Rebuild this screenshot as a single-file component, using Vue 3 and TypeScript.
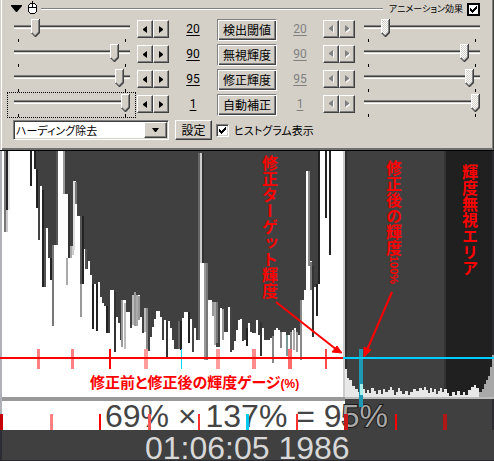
<script setup lang="ts">
import { ref } from 'vue'

interface Param {
  label: string
  min: number
  max: number
  start: number
  end: number
}

const params = ref<Param[]>([
  { label: '検出閾値', min: 5, max: 100, start: 20, end: 20 },
  { label: '無視輝度', min: 5, max: 100, start: 90, end: 90 },
  { label: '修正輝度', min: 5, max: 100, start: 95, end: 95 },
  { label: '自動補正', min: 0, max: 1, start: 1, end: 1 },
])
const filter = ref('ハーディング除去')
const animate = ref(true)
const histogram = ref(true)

function step(p: Param, delta: number) {
  p.start = Math.min(p.max, Math.max(p.min, p.start + delta))
}

// Top edge of the luminance curve, one value for every two columns.
const curve: number[] = [
  151, 151, 232, 232, 151, 151, 151, 151, 151, 151, 151, 151, 151, 151, 151, 186, 151, 169, 208, 240,
  186, 287, 287, 228, 258, 280, 326, 245, 245, 151, 151, 151, 194, 194, 258, 246, 246, 181, 204, 216,
  317, 284, 249, 269, 261, 275, 329, 284, 331, 282, 297, 303, 306, 333, 333, 290, 290, 352, 317, 323,
  340, 300, 300, 312, 312, 328, 295, 292, 295, 295, 317, 333, 308, 308, 351, 337, 327, 319, 311, 311,
  317, 340, 320, 357, 321, 328, 340, 349, 349, 321, 350, 318, 312, 312, 343, 319, 352, 328, 340, 340,
  153, 263, 263, 360, 300, 300, 302, 302, 347, 347, 308, 309, 332, 332, 307, 352, 350, 341, 330, 320,
  319, 341, 340, 346, 323, 332, 333, 333, 320, 335, 356, 328, 340, 340, 340, 338, 363, 330, 328, 330,
  348, 332, 332, 356, 335, 335, 330, 328, 332, 335, 360, 300, 290, 171, 266, 261, 337, 287, 316, 284,
]
const darkArea =
  'M0 151' + curve.map((y, i) => `V${y}H${i * 2 + 2}`).join('') + 'V151Z'

// Half-tone columns: x, top, bottom, colour
const tones: [number, number, number, string][] = [
  [4, 151, 232, '#777'], [6, 210, 232, '#c8c8c8'], [8, 151, 210, '#e4e4e4'], [6, 151, 210, '#222'],
  [30, 151, 186, '#222'], [34, 151, 169, '#222'], [36, 169, 208, '#222'], [38, 208, 240, '#444'],
  [42, 190, 287, '#222'], [44, 228, 287, '#555'], [48, 232, 258, '#444'], [50, 258, 280, '#222'],
  [52, 245, 326, '#777'], [56, 151, 245, '#555'], [63, 151, 194, '#999'], [66, 258, 285, '#aaa'],
  [68, 194, 258, '#333'], [70, 246, 258, '#aaa'], [72, 246, 255, '#ccc'], [73, 181, 250, '#ddd'],
  [75, 182, 204, '#777'], [77, 204, 216, '#444'], [80, 216, 317, '#555'], [80, 284, 317, '#999'],
  [82, 216, 284, '#222'], [85, 249, 269, '#555'], [92, 284, 329, '#222'], [96, 284, 331, '#222'],
  [106, 306, 333, '#222'], [114, 292, 352, '#333'], [121, 300, 347, '#999'], [124, 303, 349, '#bbb'],
  [132, 295, 325, '#bbb'], [134, 292, 326, '#999'], [136, 295, 326, '#aaa'], [138, 296, 320, '#999'],
  [144, 308, 332, '#bbb'], [146, 308, 350, '#888'], [166, 322, 357, '#333'], [178, 321, 349, '#666'],
  [180, 321, 350, '#222'], [188, 312, 343, '#222'], [192, 319, 352, '#444'], [198, 153, 340, '#666'],
  [200, 153, 263, '#ccc'], [202, 153, 263, '#333'], [204, 263, 360, '#999'], [206, 263, 360, '#777'],
  [212, 302, 316, '#999'], [214, 302, 345, '#aaa'], [216, 302, 343, '#777'], [222, 309, 340, '#999'],
  [230, 307, 352, '#444'], [246, 328, 346, '#222'], [260, 322, 356, '#333'], [272, 336, 363, '#888'],
  [280, 332, 348, '#888'], [286, 335, 356, '#7a9a98'], [290, 332, 349, '#888'], [293, 330, 350, '#aaa'],
  [296, 332, 352, '#999'], [300, 300, 360, '#888'], [308, 171, 266, '#888'], [310, 262, 290, '#777'],
  [312, 266, 337, '#333'], [316, 284, 316, '#222'], [318, 151, 284, '#222'], [325, 151, 218, '#222'],
  [329, 151, 255, '#222'], [343, 151, 397, '#ccc'],
]

const floor =
  'M345 397V369H347V378H349V380H352V386H355V389H358V392H360V386H363V389H365V393H367V390H369V393H371V388H374V391H376V394H378V390H381V394H383V389H385V392H388V390H390V387H392V390H394V395H396V392H398V388H400V391H402V394H405V391H408V395H410V392H413V389H416V391H419V388H422V390H424V387H426V390H428V393H430V388H432V392H434V389H436V394H438V391H440V388H442V392H444V389H447V393H449V396H452V392H455V395H457V391H460V395H463V392H465V395H468V390H471V387H474V385H476V388H479V392H482V389H484V384H486V380H488V376H490V367H492V355H494V397Z'

const upperTicks: [number, number, string][] = [
  [37, 3, '#ff8080'], [71, 3, '#ff8080'], [109, 2, '#f00'], [144, 4, '#ff9c9c'], [181, 1, '#00d8ff'],
  [216, 4, '#ff9c9c'], [252, 4, '#ff8c8c'], [288, 4, '#ff6a6a'], [325, 2, '#ff4a4a'],
]
const lowerTicks: [number, number, string][] = [
  [0, 3, '#c40000'], [50, 3, '#ff8080'], [99, 2, '#f00'], [148, 3, '#ff5a5a'], [198, 2, '#ff3030'],
  [246, 3, '#00c8ee'], [296, 2, '#ff3030'], [344, 4, '#c81818'], [395, 2, '#f00'], [443, 4, '#b01818'],
]
</script>

<template>
  <main class="window">
    <section class="panel">
      <header class="head">
        <svg class="fold" width="11" height="7" viewBox="0 0 11 7"><path d="M0 0H11V1L6 7H5L0 1Z" /></svg>
        <svg width="9" height="13" viewBox="0 0 9 13" shape-rendering="crispEdges">
          <path d="M4 0H5V2H7V3H8V4H9V11H8V12H7V13H2V12H1V11H0V4H1V3H2V2H4Z" />
          <path fill="#fff" d="M2 3H4V6H1V4H2ZM5 3H7V4H8V6H5ZM1 7H8V11H7V12H2V11H1Z" />
        </svg>
        <span class="rule"></span>
        <label class="check bold">アニメーション効果<input v-model="animate" type="checkbox" /></label>
      </header>

      <div v-for="(p, i) in params" :key="p.label" class="row">
        <div class="slider" :class="{ focused: i === 3 }">
          <input v-model.number="p.start" type="range" :min="p.min" :max="p.max" :aria-label="p.label" />
          <div class="marks"></div>
        </div>
        <div class="spin">
          <button type="button" aria-label="−" @click="step(p, -1)">
            <svg width="4" height="7" viewBox="0 0 4 7"><path d="M4 0V7L0 4V3Z" /></svg>
          </button>
          <button type="button" aria-label="+" @click="step(p, 1)">
            <svg width="4" height="7" viewBox="0 0 4 7"><path d="M0 0V7L4 4V3Z" /></svg>
          </button>
        </div>
        <button type="button" class="num">{{ p.start }}</button>
        <button type="button" class="param">{{ p.label }}</button>
        <button type="button" class="num" disabled>{{ p.end }}</button>
        <div class="spin">
          <button type="button" disabled aria-label="−">
            <svg width="5" height="8" viewBox="0 0 5 8"><path fill="#fff" d="M5 1V8L1 5V4Z" /><path d="M4 0V7L0 4V3Z" /></svg>
          </button>
          <button type="button" disabled aria-label="+">
            <svg width="5" height="8" viewBox="0 0 5 8"><path fill="#fff" d="M1 1V8L5 5V4Z" /><path d="M0 0V7L4 4V3Z" /></svg>
          </button>
        </div>
        <div class="slider">
          <input v-model.number="p.end" type="range" disabled :min="p.min" :max="p.max" :aria-label="p.label" />
          <div class="marks"></div>
        </div>
      </div>

      <footer class="foot">
        <div class="combo">
          <select v-model="filter" aria-label="フィルタ">
            <option>ハーディング除去</option>
          </select>
          <span class="drop"><svg width="7" height="4" viewBox="0 0 7 4"><path d="M0 0H7L4 4H3Z" /></svg></span>
        </div>
        <button type="button" class="setup">設定</button>
        <label class="check"><input v-model="histogram" type="checkbox" />ヒストグラム表示</label>
      </footer>
    </section>

    <svg class="chart" viewBox="0 151 494 310">
      <g shape-rendering="crispEdges">
        <rect y="151" width="494" height="310" fill="#fff" />
        <path :d="darkArea" fill="#404040" />
        <rect v-for="(t, i) in tones" :key="i" :x="t[0]" :y="t[1]" width="2" :height="t[2] - t[1]" :fill="t[3]" />
        <rect x="345" y="151" width="149" height="310" fill="#404040" />
        <rect x="345" y="151" width="2" height="218" fill="#303030" />
        <rect x="444" y="151" width="2" height="246" fill="#333" />
        <rect x="446" y="151" width="48" height="246" fill="#202020" />
        <rect x="492" y="151" width="2" height="310" fill="#2c2c30" />
        <path :d="floor" fill="#e8e8e8" />
        <path d="M479 397V392H482V389H484V384H486V380H488V376H490V367H492V355H494V397Z" fill="#a8a8a8" />
        <rect y="397" width="345" height="4" fill="#999" />
        <rect x="345" y="397" width="149" height="2" fill="#bbb" />
        <rect y="430" width="494" height="31" fill="#404040" />
        <rect y="151" width="2" height="279" fill="#b0b0b8" />
        <rect y="430" width="2" height="31" fill="#2c2c34" />
        <rect y="460" width="494" height="1" fill="#2a2a30" />
      </g>
      <text class="digits" x="105" y="427">69% × 137% = 9<tspan class="light">5%</tspan></text>
      <text class="digits time" x="145" y="459">01:06:05 1986</text>
      <g shape-rendering="crispEdges">
        <rect v-for="t in upperTicks" :key="'u' + t[0]" :x="t[0]" y="349" :width="t[1]" height="20" :fill="t[2]" />
        <rect v-for="t in lowerTicks" :key="'l' + t[0]" :x="t[0]" y="414" :width="t[1]" height="16" :fill="t[2]" />
        <rect x="359" y="349" width="4" height="58" fill="#1f98b4" />
        <rect x="360" y="384" width="3" height="11" fill="#a8f0ec" />
        <rect y="357" width="343" height="2" fill="#f00" />
        <rect x="343" y="357" width="151" height="2" fill="#0cf" />
      </g>
      <g class="arrows">
        <path d="M276 302L337 350" />
        <path d="M392 292L367 350" />
        <path class="tip" d="M342 353L337 346L332 352Z" />
        <path class="tip" d="M364 357L364 347L371 350Z" />
      </g>
      <text class="note vertical" x="270" y="155">修正ターゲット輝度</text>
      <text class="note vertical" x="394" y="160">修正後の輝度<tspan class="narrow">100%</tspan></text>
      <text class="note vertical" x="470" y="164">輝度無視エリア</text>
      <text class="note across" x="90" y="388">修正前と修正後の輝度ゲージ<tspan class="unit">(%)</tspan></text>
    </svg>
  </main>
</template>

<style>
body {
  margin: 0;
  background: #404040;
}
</style>

<style scoped>
.window {
  font: 12px/16px "Liberation Sans", "Noto Sans CJK JP", sans-serif;
  color: #000;
}
.window *,
.window {
  box-sizing: border-box;
}
svg {
  display: block;
  flex: none;
}
button,
select,
input {
  font: inherit;
  color: inherit;
  margin: 0;
  padding: 0;
  border-radius: 0;
}
.panel {
  padding-bottom: 10px;
  background: #d4d0c8;
  border-bottom: 1px solid #000;
  box-shadow: inset 1px 0 #d4d0c8, inset 2px 0 #fff, inset -1px 0 #404040, inset -2px 0 #808080, inset 0 -2px #707070;
}
.head {
  display: flex;
  height: 19px;
  padding: 1px 14px 0 11px;
}
.fold {
  margin: 4px 6px 0 0;
}
.rule {
  flex: 1;
  height: 2px;
  margin: 7px 6px 0 4px;
  border-top: 1px solid #808080;
  border-bottom: 1px solid #fff;
}
.check {
  display: flex;
  align-items: center;
  gap: 5px;
  height: 16px;
  font: 11px/16px "Noto Sans CJK JP", sans-serif;
  font-feature-settings: "palt";
  white-space: nowrap;
}
.check.bold {
  gap: 4px;
  font-size: 9px;
}
.check input {
  appearance: none;
  width: 13px;
  height: 13px;
  border: 1px solid;
  border-color: #808080 #fff #fff #808080;
  box-shadow: inset 1px 1px #404040, inset -1px -1px #d4d0c8;
  background: #fff;
}
.check.bold input {
  border: 2px solid #000;
  box-shadow: none;
}
.check input:checked {
  background: #fff url("data:image/svg+xml,%3Csvg xmlns='http://www.w3.org/2000/svg' width='7' height='7' shape-rendering='crispEdges'%3E%3Cpath d='M0 2h1v1h1v1h1v-1h1v-1h1v-1h1v-1h1v3h-1v1h-1v1h-1v1h-1v1h-1v-1h-1v-1h-1z'/%3E%3C/svg%3E") center / 7px 7px no-repeat;
}
.row {
  display: grid;
  grid-template-columns: 1fr 39px 48px 60px 46px 41px 1fr;
  height: 25px;
  padding: 0 14px;
}
.slider {
  position: relative;
}
.slider input {
  appearance: none;
  display: block;
  width: 100%;
  height: 18px;
  background: none;
}
.slider input::-webkit-slider-runnable-track {
  height: 18px;
  background: linear-gradient(#808080 0 1px, #404040 1px 2px, #d4d0c8 2px 3px, #fff 3px 4px) 0 6px / 100% 4px no-repeat;
}
.slider input::-webkit-slider-thumb {
  appearance: none;
  width: 9px;
  height: 18px;
  background: url("data:image/svg+xml,%3Csvg xmlns='http://www.w3.org/2000/svg' width='9' height='18'%3E%3Cpath d='M0 0h9v14l-4 4h-1l-4-4z' fill='%23404040'/%3E%3Cpath d='M0 0h8v13l-4 4-4-4z' fill='%23808080'/%3E%3Cpath d='M0 0h8v1h-7v13h-1z' fill='%23fff'/%3E%3Cpath d='M1 1h6v12l-3 3-3-3z' fill='%23d4d0c8'/%3E%3C/svg%3E");
}
.slider input:disabled::-webkit-slider-thumb {
  background: url("data:image/svg+xml,%3Csvg xmlns='http://www.w3.org/2000/svg' width='9' height='18'%3E%3Cdefs%3E%3Cpattern id='h' width='2' height='2' patternUnits='userSpaceOnUse'%3E%3Cpath fill='%23fff' d='M0 0h2v2h-2z'/%3E%3Cpath fill='%23d4d0c8' d='M0 0h1v1h-1zM1 1h1v1h-1z'/%3E%3C/pattern%3E%3C/defs%3E%3Cpath d='M0 0h9v14l-4 4h-1l-4-4z' fill='%23404040'/%3E%3Cpath d='M0 0h8v13l-4 4-4-4z' fill='%23808080'/%3E%3Cpath d='M0 0h8v1h-7v13h-1z' fill='%23fff'/%3E%3Cpath d='M1 1h6v12l-3 3-3-3z' fill='url(%23h)'/%3E%3C/svg%3E");
}
.marks {
  height: 3px;
  margin: 2px 4px 0;
  border: solid #000;
  border-width: 0 1px;
}
.focused::after {
  content: "";
  position: absolute;
  inset: -2px -6px 1px -7px;
  border: 1px dotted #000;
  pointer-events: none;
}
.spin {
  display: flex;
  width: 32px;
  padding-top: 1px;
}
.row > .spin:nth-child(2) {
  margin-left: 7px;
}
.spin button,
.drop {
  display: flex;
  align-items: center;
  justify-content: center;
  background: #d4d0c8;
  border: 1px solid;
  border-color: #fff #404040 #404040 #fff;
  box-shadow: inset -1px -1px #808080;
}
.spin button {
  width: 16px;
  height: 18px;
}
.spin button:disabled {
  fill: #808080;
}
.num {
  height: 20px;
  border: 0;
  background: none;
  font: 12px/20px Roboto, "Liberation Sans", sans-serif;
  text-decoration: underline;
  text-underline-offset: 2px;
}
.num:disabled {
  color: #808080;
}
.param,
.setup {
  background: #d4d0c8;
  border: 1px solid;
  font: 12px/16px "Noto Sans CJK JP", sans-serif;
  white-space: nowrap;
}
.param {
  height: 22px;
  border-color: #808080 #fff #fff #808080;
  box-shadow: inset 1px 1px #fff, inset -1px -1px #404040, inset -2px -2px #808080;
}
.setup {
  width: 37px;
  height: 20px;
  border-color: #fff #404040 #404040 #fff;
  box-shadow: inset -1px -1px #808080;
}
.foot {
  display: flex;
  align-items: flex-start;
  padding: 1px 14px 0 13px;
}
.foot .check {
  margin-top: 2px;
}
.combo {
  position: relative;
  width: 156px;
  margin-right: 6px;
}
.setup {
  margin-right: 4px;
}
.combo select {
  appearance: none;
  display: block;
  width: 100%;
  height: 20px;
  padding-left: 2px;
  background: #fff;
  border: 1px solid;
  border-color: #808080 #fff #fff #808080;
  box-shadow: inset 1px 1px #404040, inset -1px -1px #d4d0c8;
  font: 11px/16px "Noto Sans CJK JP", sans-serif;
  font-feature-settings: "palt";
}
.drop {
  position: absolute;
  top: 2px;
  right: 2px;
  bottom: 2px;
  width: 23px;
  pointer-events: none;
}
.chart {
  width: 100%;
  height: auto;
}
.digits {
  font: 32px "Liberation Sans", sans-serif;
  fill: #444;
  white-space: pre;
}
.digits .light {
  fill: #a8a8a8;
  stroke: #1c1c1c;
  stroke-width: 2px;
  paint-order: stroke;
}
.digits.time {
  fill: #d8d8d8;
}
.arrows {
  fill: none;
  stroke: #f00;
  stroke-width: 2px;
}
.arrows .tip {
  fill: #f00;
  stroke-width: 1px;
}
.note {
  font: bold 16px "Noto Sans CJK JP", sans-serif;
  fill: #f00;
}
.vertical {
  writing-mode: vertical-rl;
}
.across {
  font-size: 15px;
  font-feature-settings: "palt";
}
.narrow {
  font: bold 11px "Liberation Sans", sans-serif;
}
.unit {
  font: bold 12px "Liberation Sans", sans-serif;
}
</style>
